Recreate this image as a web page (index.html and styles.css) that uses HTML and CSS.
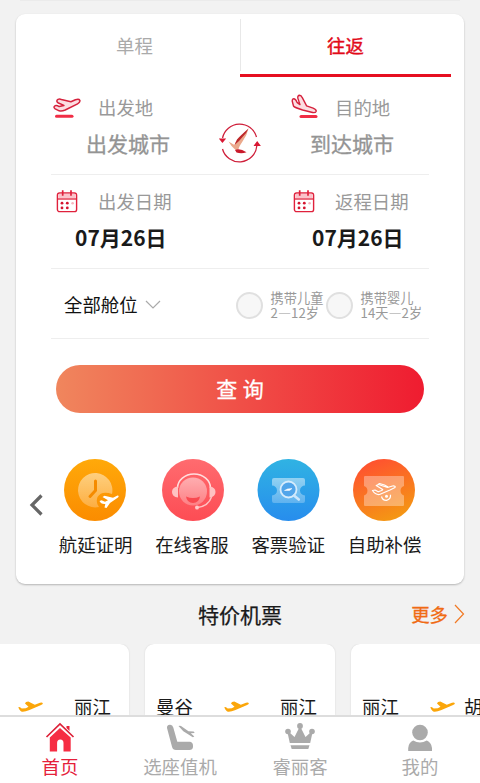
FILE: index.html
```html
<!DOCTYPE html>
<html lang="zh-CN">
<head>
<meta charset="utf-8">
<title>机票预订</title>
<link rel="stylesheet" href="styles.css">
</head>
<body>
<svg width="0" height="0" class="defs">
  <defs>
    <symbol id="calendar" viewBox="0 0 22 24">
      <rect x="1.4" y="4" width="19.2" height="18.6" rx="2.2" fill="#fff" stroke="#e0213c" stroke-width="1.4"/>
      <path d="M2.3 9.3V6q0-1.3 1.3-1.3h14.8q1.3 0 1.3 1.3v3.3z" fill="#fbc3cb"/>
      <path d="M1.6 10h18.8" stroke="#e0213c" stroke-width="1.3"/>
      <path d="M6.7 1.2v5.6M15 1.2v5.6" stroke="#e0213c" stroke-width="1.7"/>
      <g fill="#d5142f"><circle cx="6" cy="14.2" r="1.4"/><circle cx="11.3" cy="14.2" r="1.4"/><circle cx="6" cy="18.9" r="1.4"/><circle cx="11.3" cy="18.9" r="1.4"/></g>
      <circle cx="16.6" cy="14.2" r="1.3" fill="#f8b4bd"/>
    </symbol>
    <symbol id="plane" viewBox="0 0 25 12">
      <path d="M.3 6.2q1.5-1 3.4 1.2l4.1-.2 2.7-1.4L7 2.4 8 1l2.300-.5L16.800 3.700 22 1.800q2.300-.7 2.800.4.3 1-1.700 1.800L11.500 9Q7 11 4.300 10.800 2 10.500 .3 6.200z" fill="#fba60a"/>
    </symbol>
    <linearGradient id="g1" x2="0" y2="1"><stop stop-color="#ffa90a"/><stop offset="1" stop-color="#fb8c00"/></linearGradient>
    <linearGradient id="g2" x2="0" y2="1"><stop stop-color="#ff6b6f"/><stop offset="1" stop-color="#fd4c54"/></linearGradient>
    <linearGradient id="g3" x2="0" y2="1"><stop stop-color="#30b3e3"/><stop offset="1" stop-color="#278ded"/></linearGradient>
    <linearGradient id="g4" x1=".3" x2=".7" y2="1"><stop stop-color="#ff5030"/><stop offset="1" stop-color="#f49a12"/></linearGradient>
    <linearGradient id="fade" x2="0" y2="1"><stop stop-color="#fff" stop-opacity=".48"/><stop offset="1" stop-color="#fff" stop-opacity=".25"/></linearGradient>
  </defs>
</svg>

<div class="previous"></div>

<main class="card">
  <div class="tabs">
    <div class="tab">单程</div>
    <div class="tab active">往返</div>
  </div>

  <section class="row route">
    <div class="field">
      <div class="label">
        <svg class="ico" width="30" height="26" viewBox="0 0 30 26">
          <path d="M4.200 13.800q-2.300-1.700-.2-3 1.800-.6 4.200.8l4.700-1.200-6-2.700q-2.200-1.800.1-3.300 1.600-.6 3.400.1l9.500 2.300 4.500-2q3.500-1.300 4.400.5.7 2-2.200 3.500L14.200 15q-3.500 1.600-6 .8z" fill="#fcdde1" stroke="#d5213c" stroke-width="1.500" stroke-linejoin="round"/>
          <path d="M5.500 21.300h15.500" stroke="#f12d45" stroke-width="3" stroke-linecap="round"/>
        </svg><span>出发地</span>
      </div>
      <div class="city">出发城市</div>
    </div>
    <svg class="swap" width="44" height="42" viewBox="0 0 44 42">
      <path d="M4.500 15A17.500 17.500 0 0 1 38.500 14M4.500 26A17.500 17.500 0 0 0 38.800 23" fill="none" stroke="#cf1f3a" stroke-width="1.300"/>
      <path d="M.8 15.500h7.400L4.400 20zM35.500 23h7.400L39.200 18z" fill="#d91733"/>
      <path d="M30.500 5.500q-3 3.500-10 9.500-3 3.500-4 7l-6-3.500q3 5 5.500 7l3.500 3q1.500-5.500 5-10 4.500-6 6-13z" fill="#eba98c"/>
      <path d="M30.500 5.500Q23 12 19 16.500l-2.500 5.500q5-4 8-8 4.500-4.500 6-8.500z" fill="#bd282b"/>
      <path d="M17 27q5-2 11.500 2.200-5 2-10 .3z" fill="#ca1a2b"/>
    </svg>
    <div class="field">
      <div class="label">
        <svg class="ico land" width="30" height="28" viewBox="0 0 30 28">
          <path d="M2.200 7q.1-2.400 1.800-2.300 1.900.3 3 3.700l3 2.200-2.200-6.500q-.3-2.700 1.700-2.900 1.800 0 2.800 2.500l4.300 8.200 6.500 2.300q3.700 1.500 3 3.300-.8 1.700-4.500.8l-9-2.300Q4.500 13.500 3.500 12z" fill="#fcdde1" stroke="#d5213c" stroke-width="1.400" stroke-linejoin="round"/>
          <path d="M11 22.500h15" stroke="#f12d45" stroke-width="3" stroke-linecap="round"/>
        </svg><span>目的地</span>
      </div>
      <div class="city to">到达城市</div>
    </div>
  </section>

  <section class="row dates">
    <div class="field">
      <div class="label"><svg class="ico cal" width="22" height="24"><use href="#calendar"/></svg><span>出发日期</span></div>
      <div class="date">07月26日</div>
    </div>
    <div class="field">
      <div class="label"><svg class="ico cal" width="22" height="24"><use href="#calendar"/></svg><span>返程日期</span></div>
      <div class="date">07月26日</div>
    </div>
  </section>

  <section class="row cabin">
    <span class="cabin-name">全部舱位</span>
    <svg class="down" width="16" height="10" viewBox="0 0 16 10"><path d="M1 1l7 7 7-7" fill="none" stroke="#aaa" stroke-width="1.200"/></svg>
    <i class="radio"></i>
    <div class="passenger">携带儿童<br>2—12岁</div>
    <i class="radio"></i>
    <div class="passenger">携带婴儿<br>14天—2岁</div>
  </section>

  <button class="search">查 询</button>

  <section class="services">
    <svg class="prev" width="15" height="22" viewBox="0 0 15 22"><path d="M12.500 1.500L3 11l9.500 9.500" fill="none" stroke="#666" stroke-width="3.200"/></svg>
    <div class="service">
      <svg width="64" height="62" viewBox="0 0 64 62">
        <circle cx="31" cy="31" r="31" fill="url(#g1)"/>
        <path d="M48 35A17.200 17.200 0 1 0 35 48Q31.500 44 33.500 38q4-6.500 14.500-3z" fill="url(#fade)"/>
        <path d="M31.500 22v9.500L26 37.500" fill="none" stroke="#f58b00" stroke-width="3" stroke-linecap="round"/>
        <path d="M35.500 42l2-.7 3.500 1.500 3-1.500-5.500-3.200 2-1.300 8.500 2 4.500-2.200q2.200-.2.500 1.800L46 44l-3.500 5-2-.5.8-3.500q-4.300.5-5.800-3z" fill="#fff"/>
      </svg>
      <span>航延证明</span>
    </div>
    <div class="service">
      <svg width="62" height="62" viewBox="1 0 62 62" overflow="visible">
        <g transform="translate(2 0)">
        <circle cx="31" cy="31" r="31" fill="url(#g2)"/>
        <circle cx="31" cy="32.500" r="14" fill="url(#fade)"/>
        <path d="M15.500 29a16.500 14 0 0 1 33 0" fill="none" stroke="#ffdede" stroke-width="1.500"/>
        <path d="M16 27.500v11q-6-.7-6-5.500t6-5.500zM47.500 27.500v11q6-.7 6-5.500t-6-5.500z" fill="#ffc2c2"/>
        <path d="M49.500 38q-3 9-14 10.500" fill="none" stroke="#ffc2c2" stroke-width="1.500"/>
        <circle cx="35" cy="48.500" r="2" fill="#ffc9c9"/>
        <path d="M24 37.500q7 3 14 0-1 6.500-7 6.500t-7-6.500z" fill="#f94950"/>
        </g>
      </svg>
      <span>在线客服</span>
    </div>
    <div class="service">
      <svg width="62" height="62" viewBox="0 0 62 62" overflow="visible">
        <g transform="translate(.5 0)">
        <circle cx="31" cy="31" r="31" fill="url(#g3)"/>
        <path d="M16.500 19h29q2 0 2 2v5.500a5 5 0 0 0 0 10V42q0 2-2 2h-29q-2 0-2-2v-5.500a5 5 0 0 0 0-10V21q0-2 2-2z" fill="url(#fade)"/>
        <circle cx="31" cy="30.500" r="8" fill="#51a5ea" stroke="#d6ecfc" stroke-width="1.800"/>
        <path d="M36.500 36.500l4.800 4" stroke="#cce6fb" stroke-width="2.600" stroke-linecap="round"/>
        <path d="M27 31.500l3-1.500 4.500-.5-2.500 2z" fill="#fff" stroke="#fff" stroke-width=".5"/>
        </g>
      </svg>
      <span>客票验证</span>
    </div>
    <div class="service">
      <svg width="64" height="62" viewBox="0 0 64 62">
        <circle cx="31" cy="31" r="31" fill="url(#g4)"/>
        <path d="M12 17h38q1 0 1 1v9a5 5 0 0 0 0 9.500V46q0 1-1 1H12q-1 0-1-1v-9.500a5 5 0 0 0 0-9.500v-9q0-1 1-1z" fill="#fff" fill-opacity=".34"/>
        <g fill="none" stroke="#fff" stroke-width="1.200" stroke-linejoin="round"><path d="M19.500 31.500l2.500-.5 3.200 1.800 3.500-1.300 1-1-6.500-4 2.300-1 9 3 5-1.500q3.500-.3 2.500 1.500l-5 2.500-10.500 4.500q-4 .5-7-4zM25 25.500l1.500-1 5 1.500 3.500 2"/><path d="M28.500 37.500q1 4 5 3.800 4.500-1 4-5.500"/></g>
        <circle cx="33.500" cy="37.300" r="1.500" fill="#fff"/>
      </svg>
      <span>自助补偿</span>
    </div>
  </section>
</main>

<header class="deals">
  <h2>特价机票</h2>
  <a class="more">更多<svg width="11" height="20" viewBox="0 0 11 20"><path d="M1 1l8.500 9L1 19" fill="none" stroke="#f17a25" stroke-width="1.200"/></svg></a>
</header>
<section class="tickets">
  <div class="ticket"><span class="from"></span><svg width="25" height="12"><use href="#plane"/></svg><span>丽江</span></div>
  <div class="ticket"><span class="from">曼谷</span><svg width="25" height="12"><use href="#plane"/></svg><span>丽江</span></div>
  <div class="ticket long"><span class="from">丽江</span><svg width="25" height="12"><use href="#plane"/></svg><span>胡</span></div>
</section>

<nav class="nav">
  <a class="current">
    <svg width="30" height="30" viewBox="0 0 30 30"><path d="M1.500 15L15 2l13.500 13" fill="none" stroke="#dd2038" stroke-width="1.700"/><path d="M21.500 4h3v5l-3-3z" fill="#e9233a"/><path d="M4.800 15.500L15 6l10.700 9.500v14h-7.200V21a3.200 3.500 0 0 0-6.400 0v8.500H4.800z" fill="#f62d43"/></svg>
    <span>首页</span>
  </a>
  <a>
    <svg width="30" height="30" viewBox="0 0 30 30"><path d="M2 6q-.3-3 2.800-3.200Q7.500 2.500 8.300 5.500l4 14.200H24.500q3.500.3 3.500 4V25q-.3 3-3.500 3H11q-3.200 0-4-3.300z" fill="#aaa"/><path d="M13.500 4q1.500-.5 2.500 0l7.500 5.200 5 .3q1.500.5.8 1.500l-3.500.2 3.500 3.200-1.500.8-5.500-3.400-4-2.500z" fill="#aaa"/></svg>
    <span>选座值机</span>
  </a>
  <a>
    <svg width="30" height="30" viewBox="0 0 30 30"><circle cx="15" cy="4" r="2.900" fill="#aaa"/><circle cx="3" cy="9.500" r="2.800" fill="#aaa"/><circle cx="27" cy="9.500" r="2.800" fill="#aaa"/><path d="M2.500 10.500l2 0 5 4.500 4.500-9h2l4.500 9 5-4.500 2 0L25.200 21H4.800zM5.500 23.200h19L23.300 27H6.700z" fill="#aaa"/></svg>
    <span>睿丽客</span>
  </a>
  <a>
    <svg width="30" height="30" viewBox="0 0 30 30"><circle cx="15" cy="10.500" r="7.800" fill="#aaa"/><path d="M3.200 29v-3q.3-5.500 5-7.500 6.800 4 13.600 0 4.700 2 5.200 7.500v3z" fill="#aaa"/></svg>
    <span>我的</span>
  </a>
</nav>
</body>
</html>
```
FILE: styles.css
```css
* { box-sizing: border-box; }

body {
  margin: 0;
  width: 480px;
  height: 783px;
  overflow: hidden;
  display: flex;
  flex-direction: column;
  background: #f2f2f2;
  color: #1a1a1a;
  font-family: "Noto Sans CJK SC", sans-serif;
  font-size: 18.400px;
  line-height: 24px;
}

svg { display: block; flex: none; }
.defs { position: absolute; }

.previous {
  height: 1px;
  margin: 0 20px 13px;
  background: #ebebeb;
  flex: none;
}

.card {
  height: 570px;
  flex: none;
  margin: 0 16px;
  background: #fff;
  border-radius: 9px;
  box-shadow: 0 1px 2px rgba(0, 0, 0, .25);
}

.tabs {
  display: grid;
  grid-template-columns: 1fr 1fr;
  height: 63px;
  margin: 0 13px;
}
.tab {
  padding-top: 19px;
  text-align: center;
  color: #aaa;
}
.tab.active {
  color: #e20a19;
  -webkit-text-stroke: .4px;
  border-bottom: 3px solid #e60f20;
  background: linear-gradient(#e8e8e8, #e8e8e8) 0 5px / 1px 52px no-repeat;
}

.row {
  display: flex;
  margin: 0 35px;
  border-bottom: 1px solid #eee;
}
.route { height: 98px; position: relative; }
.dates { height: 94px; }
.field { width: 237px; flex: none; }
.field + .field, .swap + .field { width: 141px; }

.label {
  display: flex;
  height: 24px;
  color: #999;
}
.label span { line-height: 24px; }
.ico { width: 30px; margin-right: 17px; }
.land { margin: -1px 15px 0 2px; }
.cal { width: 22px; margin: 0 20px 0 5px; }
.route .label { margin-top: 18px; }
.dates .label { margin-top: 14px; }

.city {
  margin: 10px 0 0 35px;
  font-size: 21px;
  line-height: 28px;
  color: #949494;
  -webkit-text-stroke: .3px;
}
.city.to { margin-left: 22px; white-space: nowrap; }

.swap {
  position: absolute;
  left: 167px;
  top: 46px;
}

.date {
  margin: 10px 0 0 24px;
  font-size: 21px;
  font-weight: 700;
  line-height: 28px;
}

.cabin {
  height: 70px;
  align-items: center;
  padding-left: 13px;
}
.cabin-name { color: #111; }
.down { margin: 2px 75px 0 7px; }
.radio {
  width: 27px;
  height: 27px;
  flex: none;
  margin-top: 4px;
  border: 2px solid #e0e0e0;
  border-radius: 50%;
  background: #f7f7f7;
}
.passenger {
  width: 54px;
  margin: 3px 1px 0 8px;
  font-size: 13.200px;
  line-height: 15.500px;
  color: #999;
  white-space: nowrap;
}

.search {
  display: block;
  width: 368px;
  height: 48px;
  margin: 26px 0 0 40px;
  padding: 0 0 2px;
  border: 0;
  border-radius: 24px;
  background: linear-gradient(90deg, #f0865d, #f04a45 55%, #ef1c30);
  color: #fff;
  font: 400 21px/46px "Noto Sans CJK SC", sans-serif;
  -webkit-text-stroke: .3px;
  word-spacing: 1px;
}

.services {
  display: flex;
  margin: 46px 0 0 13px;
}
.prev { margin: 35px 3.500px 0 0; }
.service {
  width: 96.300px;
  display: flex;
  flex-direction: column;
  align-items: center;
  gap: 11px;
}

.deals {
  position: relative;
  height: 60px;
  flex: none;
}
.deals h2 {
  margin: 0;
  text-align: center;
  font-size: 21px;
  font-weight: 400;
  line-height: 60px;
  -webkit-text-stroke: .25px;
}
.more {
  position: absolute;
  right: 15px;
  top: 18px;
  display: flex;
  gap: 6px;
  color: #f06b14;
  -webkit-text-stroke: .3px;
}
.more svg { margin-top: 2px; }

.tickets {
  display: flex;
  gap: 16px;
  margin-left: -61px;
  height: 71px;
  flex: none;
  overflow: hidden;
}
.ticket {
  width: 190px;
  flex: none;
  display: flex;
  align-items: flex-start;
  padding: 50px 0 0 11px;
  background: #fff;
  border-radius: 9px 9px 0 0;
  box-shadow: 0 0 2px rgba(0, 0, 0, .12);
}
.from { width: 37px; }
.ticket svg { margin: 7px 31px 0; }
.ticket.long svg { margin-right: 9px; }

.nav {
  position: relative;
  display: grid;
  grid-template-columns: repeat(4, 1fr);
  height: 68px;
  flex: none;
  background: #fff;
  border-top: 2px solid #ddd;
  color: #aaa;
}
.nav a {
  display: flex;
  flex-direction: column;
  align-items: center;
  padding-top: 5px;
  gap: 2px;
}
.nav .current { color: #e5203a; }
```
